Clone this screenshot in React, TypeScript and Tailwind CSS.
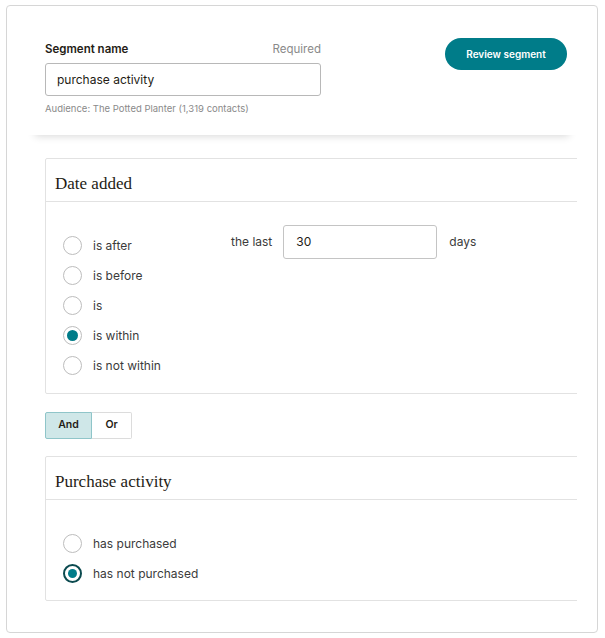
import React, { useState } from 'react';

const sans = { fontFamily: 'Inter, "Helvetica Neue", Arial, sans-serif' };

const Radio: React.FC<{ label: string; checked: boolean; strong?: boolean; onClick: () => void }> = ({ label, checked, strong, onClick }) => (
    <button onClick={onClick} className="flex h-[30px] items-center text-left">
        <span
            className={`flex h-[19px] w-[19px] shrink-0 items-center justify-center rounded-full bg-white ${
                checked && strong ? 'border-[2.5px] border-[#0b4a4f]' : 'border border-[#bdbdbd]'
            }`}
        >
            {checked && <span className={`rounded-full bg-[#007c89] ${strong ? 'h-[9px] w-[9px]' : 'h-[11px] w-[11px]'}`} />}
        </span>
        <span className="ml-[11px] text-[12px] text-[#3b3b3b]">{label}</span>
    </button>
);

const Card: React.FC<{ title: string; children: React.ReactNode; className?: string }> = ({ title, children, className = '' }) => (
    <div className={`w-[560px] rounded-l-[2px] border border-[#e2e2e2] bg-white ${className}`}>
        <div className="flex h-[43px] items-center border-b border-[#e2e2e2] pl-[9px] pt-[9px]">
            <h3 className="text-[17px] text-[#241c15]" style={{ fontFamily: '"Liberation Serif", "Times New Roman", serif' }}>
                {title}
            </h3>
        </div>
        {children}
    </div>
);

export default function App() {
    const [dateOpt, setDateOpt] = useState('is within');
    const [purchaseOpt, setPurchaseOpt] = useState('has not purchased');
    const [logic, setLogic] = useState<'and' | 'or'>('and');
    const [name, setName] = useState('purchase activity');
    const [days, setDays] = useState('30');

    const dateOptions = ['is after', 'is before', 'is', 'is within', 'is not within'];
    const purchaseOptions = ['has purchased', 'has not purchased'];

    return (
        <div className="h-[638px] w-[605px] bg-white pl-[6px] pt-[5px]" style={sans}>
            <div className="h-[628px] w-[592px] overflow-hidden rounded-[4px] border border-[#d6d6d6] bg-white">
                {/* Header */}
                <div className="ml-[20px] w-[550px] bg-white pl-[18px] pt-[35px] pb-[18px] shadow-[0_9px_8px_-8px_rgba(0,0,0,0.16)]">
                    <div className="flex items-start justify-between pr-[10px]">
                        <div className="w-[276px]">
                            <div className="flex items-center justify-between text-[11.5px]">
                                <label className="font-semibold text-[#241c15]">Segment name</label>
                                <span className="text-[#8a8a8a]">Required</span>
                            </div>
                            <input
                                value={name}
                                onChange={(e) => setName(e.target.value)}
                                className="mt-[5px] h-[33px] w-full rounded-[3px] border border-[#b8b8b8] px-[11px] text-[12px] text-[#241c15] outline-none"
                            />
                            <p className="mt-[6px] text-[9.5px] text-[#8a8a8a]">Audience: The Potted Planter (1,319 contacts)</p>
                        </div>
                        <button className="mt-[-3px] h-[32px] w-[122px] rounded-full bg-[#007c89] text-[10px] font-semibold text-white">
                            Review segment
                        </button>
                    </div>
                </div>

                {/* Conditions */}
                <div className="ml-[20px] w-[550px] overflow-hidden pl-[18px] pt-[23px]">
                    <Card title="Date added">
                        <div className="flex pl-[17px] pt-[29px] pb-[12px]">
                            <div className="flex w-[168px] flex-col">
                                {dateOptions.map((o) => (
                                    <Radio key={o} label={o} checked={dateOpt === o} onClick={() => setDateOpt(o)} />
                                ))}
                            </div>
                            <div className="mt-[-6px] flex h-[34px] items-center">
                                <span className="text-[12px] text-[#3b3b3b]">the last</span>
                                <input
                                    value={days}
                                    onChange={(e) => setDays(e.target.value)}
                                    className="ml-[11px] h-[34px] w-[154px] rounded-[3px] border border-[#c4c4c4] px-[12px] text-[12px] text-[#241c15] outline-none"
                                />
                                <span className="ml-[12px] text-[12px] text-[#3b3b3b]">days</span>
                            </div>
                        </div>
                    </Card>

                    <div className="mt-[18px] flex h-[27px] w-[87px] text-[10.5px] font-semibold text-[#241c15]">
                        <button
                            onClick={() => setLogic('and')}
                            className={`w-[47px] rounded-l-[2px] border ${logic === 'and' ? 'border-[#8fc5c9] bg-[#cfe7e8]' : 'border-[#dcdcdc] bg-white'}`}
                        >
                            And
                        </button>
                        <button
                            onClick={() => setLogic('or')}
                            className={`w-[40px] rounded-r-[2px] border border-l-0 ${logic === 'or' ? 'border-[#8fc5c9] bg-[#cfe7e8]' : 'border-[#dcdcdc] bg-white'}`}
                        >
                            Or
                        </button>
                    </div>

                    <Card title="Purchase activity" className="mt-[17px]">
                        <div className="flex flex-col pl-[17px] pt-[29px] pb-[11px]">
                            {purchaseOptions.map((o) => (
                                <Radio key={o} label={o} strong checked={purchaseOpt === o} onClick={() => setPurchaseOpt(o)} />
                            ))}
                        </div>
                    </Card>
                </div>
            </div>
        </div>
    );
}
